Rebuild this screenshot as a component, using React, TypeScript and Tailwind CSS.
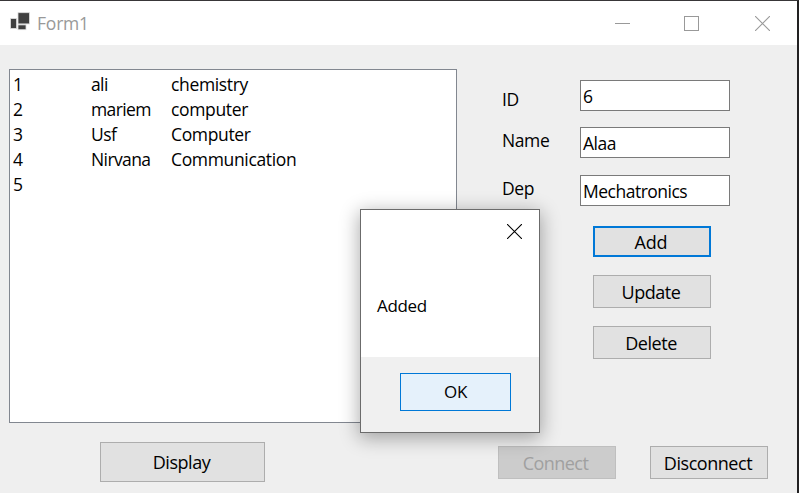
import React from 'react';

const rows = [
  { id: '1', name: 'ali', dep: 'chemistry' },
  { id: '2', name: 'mariem', dep: 'computer' },
  { id: '3', name: 'Usf', dep: 'Computer' },
  { id: '4', name: 'Nirvana', dep: 'Communication' },
  { id: '5', name: '', dep: '' },
];

const button = 'flex items-center justify-center border border-[#adadad] bg-[#e1e1e1] pt-px pr-0.5 text-[18px] tracking-[-0.45px]';

function FormIcon() {
  return (
    <svg width="20" height="20" viewBox="0 0 20 20" fill="#404040" stroke="#dcdcdc" strokeWidth="0.8">
      <rect x="8" y="1.7" width="11.4" height="11.2" />
      <rect x="0.6" y="7.6" width="6" height="9.8" />
      <rect x="8" y="13.9" width="8" height="4.8" />
    </svg>
  );
}

function CloseIcon({ className }: { className: string }) {
  return (
    <svg width="15" height="15" viewBox="0 0 15 15" fill="none" stroke="currentColor" strokeWidth="1.1" className={className}>
      <path d="M0 0 15 15M15 0 0 15" />
    </svg>
  );
}

function Field({ label, value, className, labelClass }: { label: string; value: string; className: string; labelClass: string }) {
  return (
    <div className={`flex h-[31px] ${className}`}>
      <span className={`ml-1 w-[78px] leading-[25px] ${labelClass}`}>{label}</span>
      <div className="h-[31px] w-[150px] border border-[#7a7a7a] bg-white pt-[3px] pl-0.5 leading-[25px] tracking-[-0.5px]">{value}</div>
    </div>
  );
}

function MessageBox() {
  return (
    <div className="absolute top-[208px] left-[360px] flex h-[224px] w-[180px] flex-col border border-[#6b6b6b] bg-white text-[17px] tracking-[-0.35px] shadow-[0_4px_18px_1px_rgba(0,0,0,0.33)]">
      <div className="flex justify-end pt-3.5 pr-[17px]">
        <CloseIcon className="text-black" />
      </div>
      <div className="mt-[54px] flex-1 pl-4 leading-[25px]">Added</div>
      <div className="h-[75px] bg-[#f0f0f0] pt-4 pl-[39px]">
        <button className="flex h-[38px] w-[111px] items-center justify-center border border-[#0078d7] bg-[#e5f1fb]">OK</button>
      </div>
    </div>
  );
}

export default function App() {
  return (
    <div className="relative h-[493px] w-[799px] overflow-hidden border-t border-r-2 border-t-[#383638] border-r-[#222122] bg-[#efefef] font-['Open_Sans','Noto_Sans',sans-serif] text-[17.5px] tracking-[-0.4px] text-black">
      <header className="flex h-11 items-center bg-white text-[#999999]">
        <div className="ml-2.5 -mt-1">
          <FormIcon />
        </div>
        <span className="ml-[7px] flex-1 tracking-[-0.2px]">Form1</span>
        <div className="mr-[27px] flex items-center">
          <div className="h-px w-[15px] bg-[#999999]" />
          <div className="ml-[54px] h-[15px] w-[15px] border border-[#999999]" />
          <CloseIcon className="ml-[56px]" />
        </div>
      </header>
      <main className="flex">
        <section className="ml-[9px] w-[448px] pt-6">
          <div className="h-[354px] border border-[#828790] bg-white pt-0.5 pl-[3px]">
            {rows.map((r) => (
              <div key={r.id} className="flex h-[25px] leading-[25px]">
                <span className="w-[78px]">{r.id}</span>
                <span className="w-20 tracking-[-0.6px]">{r.name}</span>
                <span className="tracking-[-0.35px]">{r.dep}</span>
              </div>
            ))}
          </div>
          <button className={`${button} mt-[19px] ml-[91px] h-10 w-[165px]`}>Display</button>
        </section>
        <section className="ml-[41px] w-[270px] pt-[35px]">
          <Field label="ID" value="6" className="" labelClass="mt-[7px]" />
          <Field label="Name" value="Alaa" className="mt-4" labelClass="mt-px" />
          <Field label="Dep" value="Mechatronics" className="mt-[17px]" labelClass="mt-px" />
          <div className="ml-[95px] flex w-[118px] flex-col pt-5">
            <button className="flex h-[31px] items-center justify-center border-2 border-[#0078d7] bg-[#e1e1e1] pt-0.5 pr-0.5 text-[18px] tracking-[-0.2px]">Add</button>
            <button className={`${button} mt-[18px] h-[33px]`}>Update</button>
            <button className={`${button} mt-[18px] h-[33px]`}>Delete</button>
          </div>
          <div className="mt-[87px] flex justify-between">
            <button className="flex h-[33px] w-[118px] items-center justify-center border border-[#bfbfbf] bg-[#cccccc] pt-px pr-[3px] text-[18px] tracking-[-0.55px] text-[#a0a0a0]">Connect</button>
            <button className={`${button} h-[33px] w-[118px]`}>Disconnect</button>
          </div>
        </section>
      </main>
      <MessageBox />
    </div>
  );
}
